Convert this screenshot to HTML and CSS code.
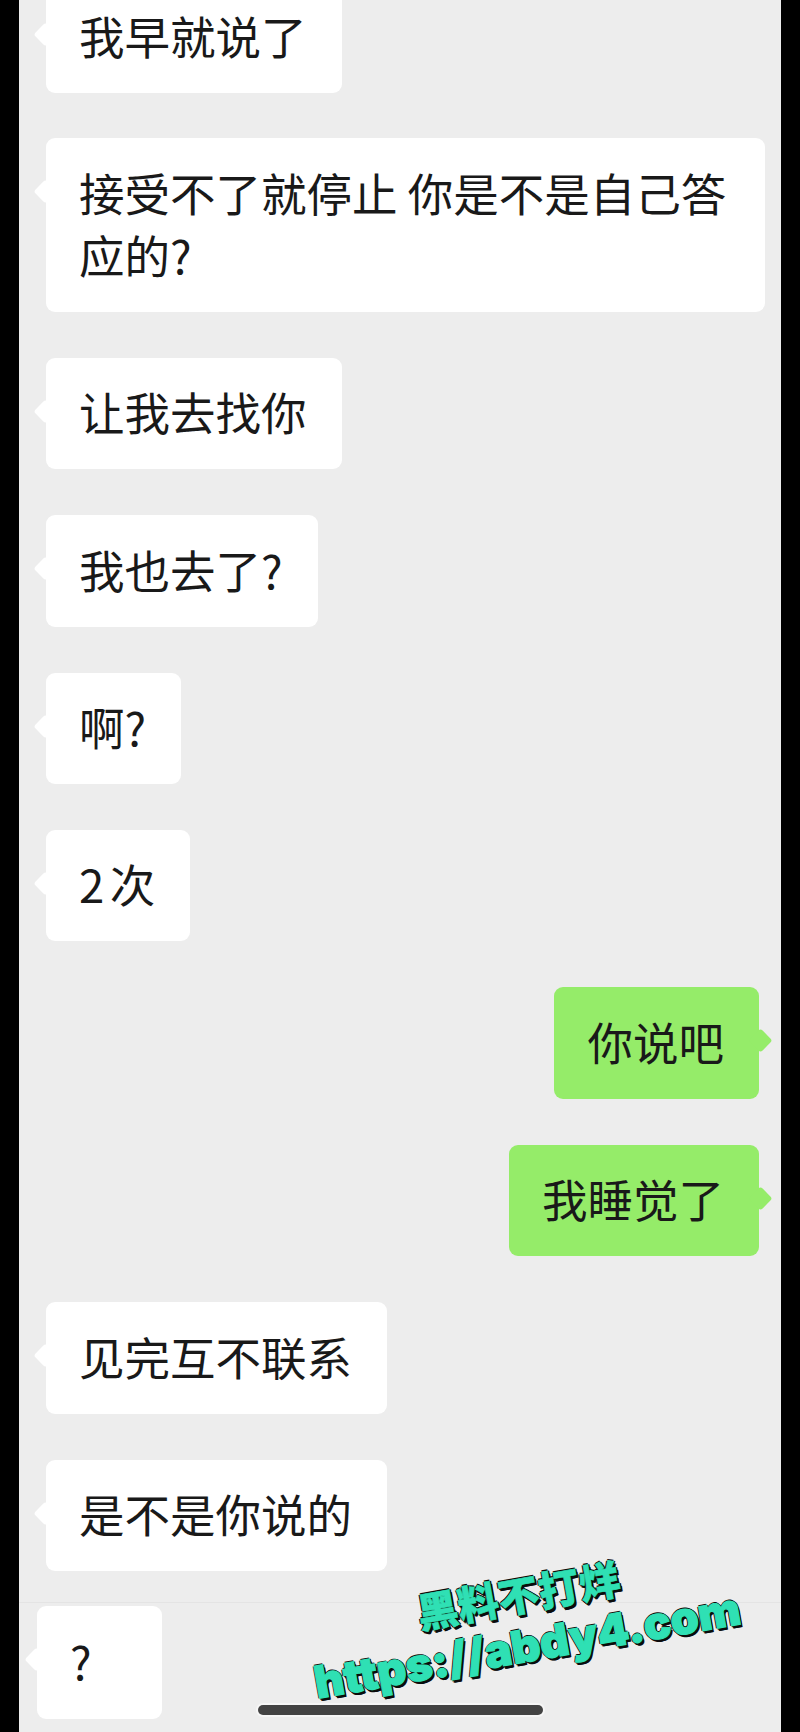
FILE: index.html
```html
<!DOCTYPE html>
<html lang="zh-CN">
<head>
    <meta charset="UTF-8">
    <meta name="viewport" content="width=device-width, initial-scale=1.0">
    <title>聊天记录</title>
    <link rel="stylesheet" href="styles.css">
</head>
<body>
    <div class="chat">
        <div class="messages">
            <div class="bubble">我早就说了</div>
            <div class="bubble">接受不了就停止 你是不是自己答应的?</div>
            <div class="bubble">让我去找你</div>
            <div class="bubble">我也去了?</div>
            <div class="bubble">啊?</div>
            <div class="bubble"><span class="num">2</span>次</div>
            <div class="bubble mine">你说吧</div>
            <div class="bubble mine">我睡觉了</div>
            <div class="bubble">见完互不联系</div>
            <div class="bubble">是不是你说的</div>
        </div>

        <div class="footer">
            <div class="bubble last">?</div>
        </div>

        <div class="home-bar"></div>

        <div class="stamp">
            <div class="stamp-title">黑料不打烊</div>
            <div class="stamp-url">https://abdy4.com</div>
        </div>
    </div>
</body>
</html>
```

FILE: styles.css
```css
:root {
    --paper: #ededed;
    --green: #95ec69;
    --ink: #191919;
    --mint: #2fe0b4;
    --edge: #0b0b0b;
}
* {
    box-sizing: border-box;
}
html, body {
    margin: 0;
    height: 100%;
    background: #000;
}
.chat {
    position: relative;
    height: 1732px;
    margin: 0 19px;
    background: var(--paper);
    overflow: hidden;
    font-family: "Noto Sans CJK SC", "Liberation Sans", sans-serif;
    color: var(--ink);
}
.messages {
    display: flex;
    flex-direction: column;
    align-items: flex-start;
    gap: 45.9px;
    margin-top: -19px;
    padding: 0 16px 0 27px;
}
.bubble {
    position: relative;
    max-width: 719px;
    padding: 22.5px 35px 27px 33px;
    border-radius: 9px;
    background: #fff;
    font-size: 45.5px;
    line-height: 62px;
}
.num {
    letter-spacing: 5.5px;
}
/* little tail pointing at the sender */
.bubble::before {
    content: "";
    position: absolute;
    top: 45px;
    left: -9px;
    width: 17px;
    height: 17px;
    background: inherit;
    border-radius: 3px;
    transform: rotate(45deg);
}
.mine {
    align-self: flex-end;
    margin-right: 6px;
    background: var(--green);
}
.mine::before {
    left: auto;
    right: -10px;
}
.footer {
    height: 130px;
    margin-top: 31px;
    padding: 3px 0 0 18px;
    border-top: 1px solid #e4e4e4;
}
.last {
    width: 125px;
    height: 113px;
}
.home-bar {
    position: absolute;
    left: 239px;
    top: 1705px;
    width: 285px;
    height: 10px;
    border-radius: 5px;
    background: #434343;
    box-shadow: 0 0 0 2px #f6f6f6;
}
/* site stamp laid across the bottom corner */
.stamp {
    position: absolute;
    left: 264px;
    top: 1570px;
    width: 480px;
    text-align: center;
    color: var(--mint);
    transform: rotate(-10deg);
}
.stamp-title,
.stamp-url {
    text-shadow: 1.5px 0 0 var(--edge), -1.5px 0 0 var(--edge), 0 1.5px 0 var(--edge), 0 -1.5px 0 var(--edge), 2px 3px 0 var(--edge), 1px 3px 0 var(--edge);
}
.stamp-title {
    -webkit-text-stroke: 0.6px var(--mint);
    font-weight: 900;
    font-size: 41px;
    line-height: 46px;
}
.stamp-url {
    -webkit-text-stroke: 1.2px var(--mint);
    margin-top: 3px;
    font-family: "Inter", "DejaVu Sans", sans-serif;
    font-weight: 900;
    font-size: 45px;
    line-height: 54px;
    white-space: nowrap;
}
```
